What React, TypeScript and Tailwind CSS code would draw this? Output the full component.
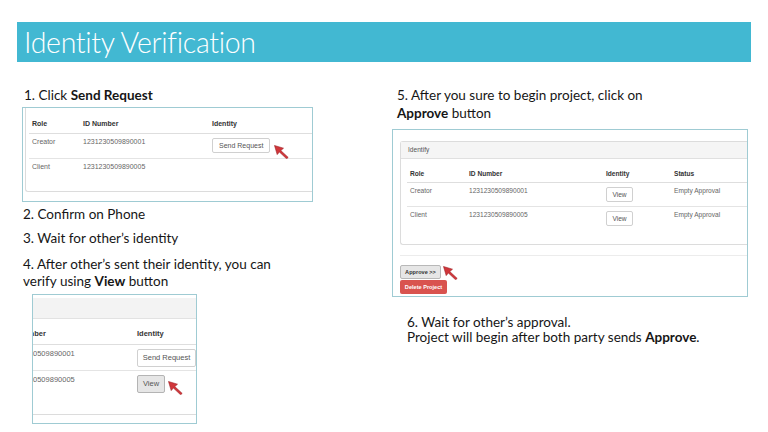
import React from 'react';

function Cursor({ className = '' }: { className?: string }) {
  return (
    <svg className={className} width="15" height="14" viewBox="0 0 15 14">
      <path
        d="M0.5 0.5 L9.5 3.2 L6.8 5.6 L14.2 12.4 L12.6 13.8 L5.4 7 L3.2 9.6 Z"
        fill="#d0363a"
        stroke="#9e2226"
        strokeWidth="0.6"
        strokeLinejoin="round"
      />
    </svg>
  );
}

function Step({ children, className = '' }: { children: React.ReactNode; className?: string }) {
  return <p className={`text-[13.5px] text-[#161616] ${className}`}>{children}</p>;
}

function SendRequestShot() {
  return (
    <div className="w-[291px] h-[95px] border border-[#9fcbd3] overflow-hidden bg-white">
      <div className="ml-[2px] h-[84px] border-l border-b border-[#dcdcdc] rounded-bl-[3px] font-['Liberation_Sans',sans-serif] text-[7px] text-[#666]">
        <div className="ml-[3px] pt-[8px]">
          <div className="flex h-[18px] border-b border-[#dedede] font-bold text-[#333] leading-[10px] pt-[3px]">
            <div className="w-[51px] pl-[3px]">Role</div>
            <div className="w-[129px] pl-[3px]">ID Number</div>
            <div className="pl-[3px]">Identity</div>
          </div>
          <div className="flex h-[25px] border-b border-[#e4e4e4] leading-[10px]">
            <div className="w-[51px] pl-[3px] pt-[3px]">Creator</div>
            <div className="w-[129px] pl-[3px] pt-[3px]">1231230509890001</div>
            <div className="pl-[3px] pt-[4px] flex items-start">
              <div className="h-[15px] px-[6px] border border-[#d0d0d0] rounded-[2px] flex items-center text-[#555]">Send Request</div>
              <Cursor className="ml-[4px] mt-[7px]" />
            </div>
          </div>
          <div className="flex leading-[10px] pt-[3px]">
            <div className="w-[51px] pl-[3px]">Client</div>
            <div className="w-[129px] pl-[3px]">1231230509890005</div>
          </div>
        </div>
      </div>
    </div>
  );
}

function ViewShot() {
  return (
    <div className="w-[165px] h-[130px] border border-[#9fcbd3] overflow-hidden bg-white">
      <div className="mt-[3px] h-[117px] border-b border-[#dcdcdc] font-['Liberation_Sans',sans-serif] text-[7.5px] text-[#666]">
        <div className="h-[21px] bg-[#f3f3f3] border-b border-[#e2e2e2]" />
        <div className="ml-[-28px] w-[220px]">
          <div className="flex h-[26px] border-b border-[#dedede] font-bold text-[#333] leading-[10px] pt-[10px]">
            <div className="w-[129px] pl-[3px]">ID Number</div>
            <div className="pl-[3px]">Identity</div>
          </div>
          <div className="flex h-[26px] border-b border-[#e4e4e4] leading-[10px]">
            <div className="w-[129px] pl-[3px] pt-[4px]">1231230509890001</div>
            <div className="pl-[3px] pt-[4px]">
              <div className="h-[18px] w-[59px] border border-[#d0d0d0] rounded-[2px] flex items-center justify-center text-[#555]">Send Request</div>
            </div>
          </div>
          <div className="flex leading-[10px]">
            <div className="w-[129px] pl-[3px] pt-[4px]">1231230509890005</div>
            <div className="pl-[3px] pt-[4px] flex items-start">
              <div className="h-[18px] w-[28px] border border-[#b4b4b4] bg-[#e6e6e6] rounded-[2px] flex items-center justify-center text-[#555]">View</div>
              <Cursor className="ml-[3px] mt-[6px]" />
            </div>
          </div>
        </div>
      </div>
    </div>
  );
}

function ApproveShot() {
  const rows = [
    { role: 'Creator', id: '1231230509890001' },
    { role: 'Client', id: '1231230509890005' },
  ];
  return (
    <div className="w-[356px] h-[168px] border border-[#9fcbd3] overflow-hidden bg-white font-['Liberation_Sans',sans-serif] text-[6.6px] text-[#666]">
      <div className="ml-[7px] mt-[11px] h-[104px] border-l border-t border-b border-[#dcdcdc] rounded-l-[3px]">
        <div className="h-[17px] bg-[#f5f5f5] border-b border-[#e0e0e0] pl-[7px] flex items-center text-[#555]">Identify</div>
        <div className="ml-[6px]">
          <div className="flex h-[24px] border-b border-[#dedede] font-bold text-[#333] leading-[9px] pt-[10px]">
            <div className="w-[59px] pl-[3px]">Role</div>
            <div className="w-[137px] pl-[3px]">ID Number</div>
            <div className="w-[68px] pl-[3px]">Identity</div>
            <div className="pl-[3px]">Status</div>
          </div>
          {rows.map((r, i) => (
            <div key={r.role} className={`flex h-[24px] leading-[9px] ${i === 0 ? 'border-b border-[#e4e4e4]' : ''}`}>
              <div className="w-[59px] pl-[3px] pt-[3px]">{r.role}</div>
              <div className="w-[137px] pl-[3px] pt-[3px]">{r.id}</div>
              <div className="w-[68px] pl-[3px] pt-[4px]">
                <div className="h-[15px] w-[27px] border border-[#d0d0d0] rounded-[2px] flex items-center justify-center text-[#555]">View</div>
              </div>
              <div className="pl-[3px] pt-[3px]">Empty Approval</div>
            </div>
          ))}
        </div>
      </div>
      <div className="ml-[7px] mt-[10px] border-t border-[#ececec]" />
      <div className="ml-[7px] mt-[9px] flex items-start">
        <div className="h-[14px] w-[41px] bg-[#e6e6e6] border border-[#b8b8b8] rounded-[2px] flex items-center justify-center text-[5.6px] font-bold text-[#333]">Approve &gt;&gt;</div>
        <Cursor className="ml-[2px] mt-[1px]" />
      </div>
      <div className="ml-[7px] h-[14px] w-[47px] bg-[#d9534f] rounded-[2px] flex items-center justify-center text-[5.6px] font-bold text-white">Delete Project</div>
    </div>
  );
}

export default function App() {
  return (
    <div className="w-[768px] h-[432px] bg-white overflow-hidden font-['Lato',sans-serif]">
      <div className="pt-[22px] px-[17px]">
        <div className="h-[40px] bg-[#42b8d2] pl-[7px] flex items-center text-white text-[28.5px] font-light tracking-[-0.3px]">
          Identity Verification
        </div>
      </div>

      <div className="flex items-start">
        {/* left column */}
        <div className="ml-[22px] w-[291px] mt-[26px] leading-[15px]">
          <Step className="pl-[2px]">
            1. Click <b>Send Request</b>
          </Step>
          <div className="mt-[4px]">
            <SendRequestShot />
          </div>
          <Step className="pl-[1px] mt-[5px]">2. Confirm on Phone</Step>
          <Step className="pl-[1px] mt-[9px]">3. Wait for other’s identity</Step>
          <Step className="pl-[1px] mt-[10px] leading-[17px]">
            4. After other’s sent their identity, you can
            <br />
            verify using <b>View</b> button
          </Step>
          <div className="ml-[10px] mt-[4px]">
            <ViewShot />
          </div>
        </div>

        {/* right column */}
        <div className="ml-[79px] w-[356px] mt-[24px]">
          <Step className="pl-[5px] leading-[18px]">
            5. After you sure to begin project, click on
            <br />
            <b>Approve</b> button
          </Step>
          <div className="mt-[7px]">
            <ApproveShot />
          </div>
          <Step className="pl-[15px] mt-[18px] leading-[15px]">
            6. Wait for other’s approval.
            <br />
            Project will begin after both party sends <b>Approve</b>.
          </Step>
        </div>
      </div>
    </div>
  );
}
